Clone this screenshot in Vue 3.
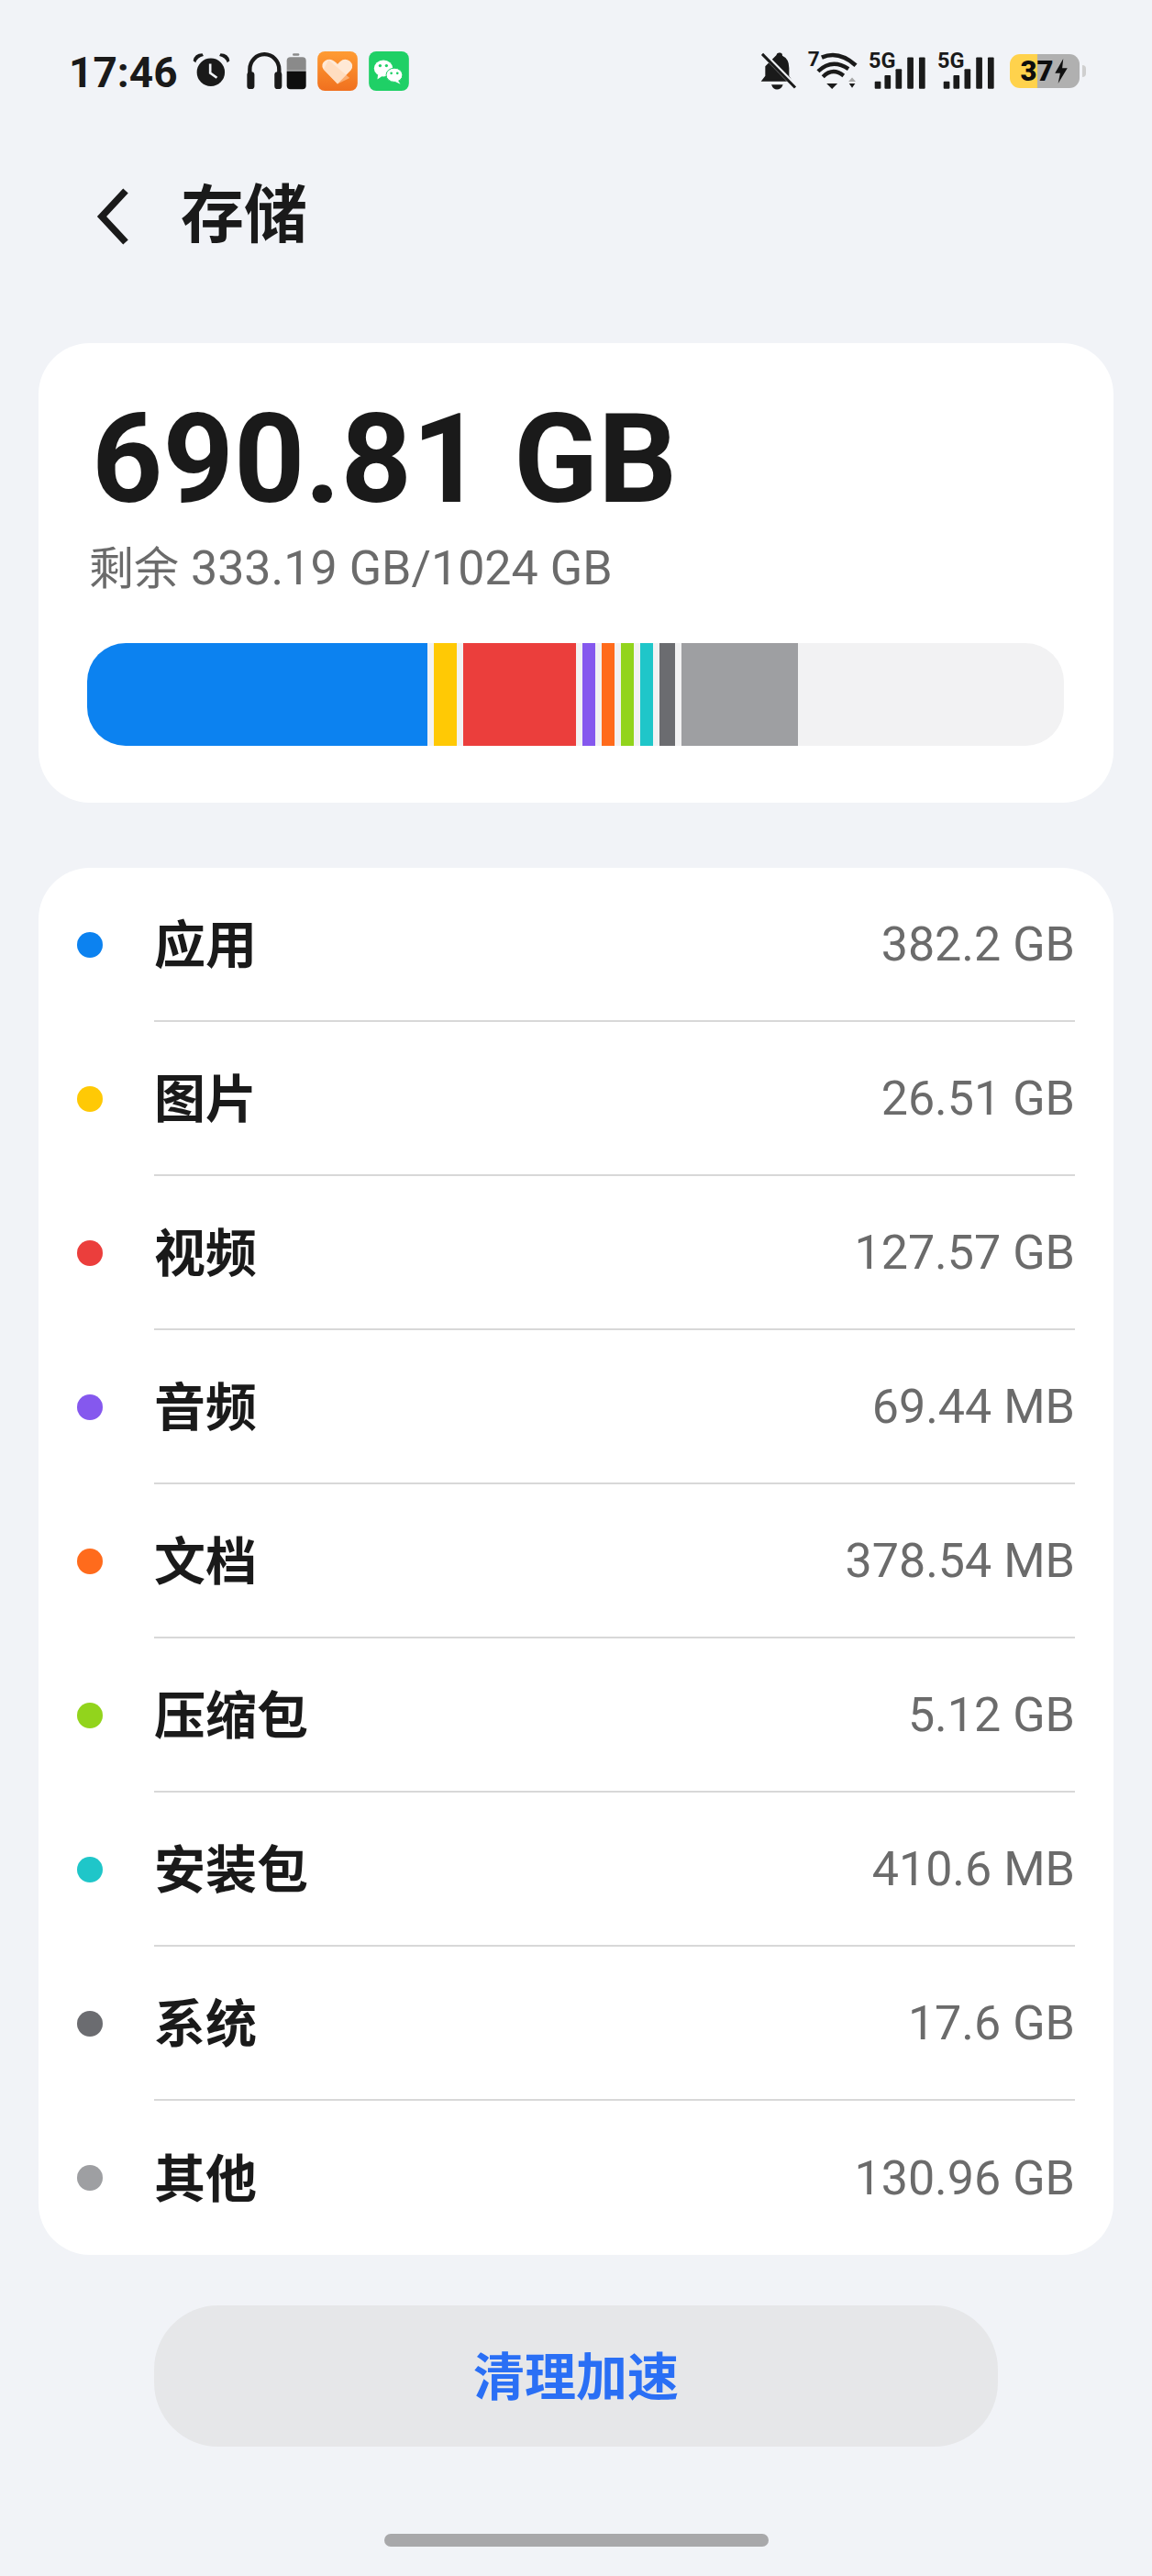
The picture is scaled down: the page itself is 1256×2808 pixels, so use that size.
<script setup>
const segments = [
  { color: '#0c82f0', width: 371 },
  { color: '#ffc905', width: 25 },
  { color: '#eb3e3c', width: 123 },
  { color: '#8558ee', width: 14 },
  { color: '#ff6b1c', width: 14 },
  { color: '#92d41c', width: 14 },
  { color: '#1fc6c9', width: 14 },
  { color: '#6b6c70', width: 17 },
  { color: '#9e9fa2', width: 126.5 },
]

const rows = [
  { name: '应用', size: '382.2 GB', color: '#0c82f0' },
  { name: '图片', size: '26.51 GB', color: '#ffc905' },
  { name: '视频', size: '127.57 GB', color: '#eb3e3c' },
  { name: '音频', size: '69.44 MB', color: '#8558ee' },
  { name: '文档', size: '378.54 MB', color: '#ff6b1c' },
  { name: '压缩包', size: '5.12 GB', color: '#92d41c' },
  { name: '安装包', size: '410.6 MB', color: '#1fc6c9' },
  { name: '系统', size: '17.6 GB', color: '#6b6c70' },
  { name: '其他', size: '130.96 GB', color: '#9e9fa2' },
]
</script>

<template>
  <div class="page">
    <!-- status bar -->
    <div class="status">
      <div class="status-left">
        <span class="time">17:46</span>
        <svg class="ic alarm" viewBox="480 82 130 125" width="43" height="42">
          <circle cx="540" cy="150" r="46" fill="#1a1a1a" />
          <path d="M482 112 Q486 88 512 88 L516 96 Q496 100 490 118Z" fill="#1a1a1a" />
          <path d="M602 112 Q598 88 572 88 L568 96 Q588 100 594 118Z" fill="#1a1a1a" />
          <path d="M538 122 V152 L560 168" fill="none" stroke="#f1f3f7" stroke-width="8" />
        </svg>
        <svg class="ic phones" viewBox="652 85 122 122" width="41" height="41">
          <path d="M665 170 V140 A45 46 0 0 1 760 140 V170" fill="none" stroke="#1a1a1a" stroke-width="13" />
          <rect x="656" y="148" width="24" height="56" rx="10" fill="#1a1a1a" />
          <rect x="745" y="148" width="24" height="56" rx="10" fill="#1a1a1a" />
        </svg>
        <svg class="ic pod" viewBox="785 85 66 122" width="22" height="41">
          <rect x="806" y="88" width="22" height="8" rx="4" fill="#8a8a8a" />
          <path d="M787 144 V112 Q787 100 799 100 H838 Q850 100 850 112 V144Z" fill="#8a8a8a" />
          <path d="M787 146 H850 V194 Q850 205 838 205 H799 Q787 205 787 194Z" fill="#0e0e0e" />
        </svg>
        <svg class="ic health" viewBox="888 80 132 130" width="44" height="43">
          <defs>
            <linearGradient id="hg" x1="0" y1="0" x2="0" y2="1">
              <stop offset="0" stop-color="#ff9c33" />
              <stop offset="1" stop-color="#f0701f" />
            </linearGradient>
          </defs>
          <rect x="888" y="80" width="132" height="130" rx="24" fill="url(#hg)" />
          <path d="M954 187 L908 140 Q896 122 914 110 Q932 100 950 118 L954 122 L962 114 Q978 100 994 112 Q1010 126 998 142Z" fill="#ffe9d6" />
          <path d="M924 108 L994 168 L954 187 L908 140Z" fill="#ffd3ae" opacity=".55" />
        </svg>
        <svg class="ic wechat" viewBox="1056 80 132 130" width="44" height="43">
          <rect x="1056" y="80" width="132" height="130" rx="24" fill="#1fd066" />
          <ellipse cx="1104" cy="136" rx="31" ry="27" fill="#fff" />
          <path d="M1086 156 L1084 172 L1102 160Z" fill="#fff" />
          <ellipse cx="1140" cy="158" rx="27" ry="23" fill="#fff" stroke="#1fd066" stroke-width="3" />
          <path d="M1152 176 L1160 188 L1140 178Z" fill="#fff" />
          <circle cx="1093" cy="127" r="5" fill="#1fd066" />
          <circle cx="1114" cy="127" r="5" fill="#1fd066" />
          <circle cx="1130" cy="152" r="4" fill="#1fd066" />
          <circle cx="1150" cy="152" r="4" fill="#1fd066" />
        </svg>
      </div>
      <div class="status-right">
        <svg class="bell" viewBox="98 80 120 125" width="40" height="42">
          <path d="M150 92 Q152 82 162 84 Q170 84 170 94 Q192 104 192 134 V160 L204 178 H100 L114 160 V128Z" fill="#1a1a1a" />
          <path d="M134 188 H172 Q166 204 152 204 Q140 204 134 188Z" fill="#1a1a1a" />
          <path d="M104 84 L212 194" stroke="#f1f3f7" stroke-width="16" />
          <path d="M104 88 L212 198" stroke="#1a1a1a" stroke-width="9" />
        </svg>
        <svg class="wifi" viewBox="248 60 166 146" width="55" height="49">
          <text x="250" y="128" class="s-text seven">7</text>
          <path d="M296 100 Q352 76 408 126" fill="none" stroke="#1a1a1a" stroke-width="14" />
          <path d="M284 146 Q330 102 384 138" fill="none" stroke="#1a1a1a" stroke-width="13" />
          <path d="M300 164 Q332 132 368 160" fill="none" stroke="#1a1a1a" stroke-width="13" />
          <path d="M312 186 H348 L330 204Z" fill="#1a1a1a" />
          <path d="M396 166 L408 180 H384Z" fill="#a8a8a8" />
          <path d="M386 186 H406 L396 200Z" fill="#1a1a1a" />
        </svg>
        <svg v-for="n in 2" :key="n" class="signal" viewBox="446 66 188 139" width="63" height="47">
          <text x="446" y="135" class="s-text five">5G</text>
          <rect x="466" y="178" width="20" height="24" rx="3" fill="#1a1a1a" />
          <rect x="498" y="158" width="20" height="44" rx="3" fill="#1a1a1a" />
          <rect x="534" y="138" width="20" height="64" rx="3" fill="#1a1a1a" />
          <rect x="572" y="100" width="20" height="102" rx="3" fill="#1a1a1a" />
          <rect x="610" y="100" width="20" height="102" rx="3" fill="#1a1a1a" />
        </svg>
        <div class="battery">
          <div class="battery-body">
            <span>37</span>
            <svg viewBox="0 0 14 24" width="16" height="27">
              <path d="M9 0 L1 14 H6 L4 24 L13 9 H8Z" fill="#111" />
            </svg>
          </div>
          <div class="battery-nub"></div>
        </div>
      </div>
    </div>

    <!-- header -->
    <div class="header">
      <svg class="back" viewBox="0 0 40 64" width="40" height="64">
        <path d="M33 4 L7 32 L33 60" fill="none" stroke="#1a1a1a" stroke-width="7.5" />
      </svg>
      <h1>存储</h1>
    </div>

    <!-- usage -->
    <section class="card usage">
      <div class="used">690.81 GB</div>
      <div class="left"><span class="left-label">剩余</span> 333.19 GB/1024 GB</div>
      <div class="bar">
        <div
          v-for="(seg, i) in segments"
          :key="i"
          class="seg"
          :style="{ width: seg.width + 'px', background: seg.color }"
        ></div>
      </div>
    </section>

    <!-- list -->
    <section class="card list">
      <div v-for="row in rows" :key="row.name" class="row">
        <span class="dot" :style="{ background: row.color }"></span>
        <div class="row-main">
          <span class="name">{{ row.name }}</span>
          <span class="size">{{ row.size }}</span>
        </div>
      </div>
    </section>

    <button class="clean">清理加速</button>
    <div class="home"></div>
  </div>
</template>

<style scoped>
.page {
  width: 1256px;
  height: 2808px;
  box-sizing: border-box;
  background: #f1f3f7;
  padding-top: 54px;
  overflow: hidden;
  font-family: Roboto, "Noto Sans CJK SC", sans-serif;
  color: #1a1a1a;
}

.status {
  height: 46px;
  display: flex;
  justify-content: space-between;
  align-items: center;
  padding: 0 72px 0 75px;
}

.status-left,
.status-right {
  display: flex;
  align-items: center;
}

.time {
  font-size: 46px;
  font-weight: 700;
  width: 135px;
  margin-top: 3px;
}

.ic {
  flex: none;
}

.phones {
  margin-left: 15px;
}

.pod {
  margin-left: 3px;
}

.health {
  margin-left: 12px;
}

.wechat {
  margin-left: 12px;
}

.status-right svg {
  flex: none;
}

.wifi {
  margin-left: 11px;
  margin-top: -7px;
}

.signal {
  margin-left: 12px;
  margin-top: -5px;
}

.s-text {
  font-family: Roboto, sans-serif;
  font-weight: 700;
  fill: #1a1a1a;
}

.seven {
  font-size: 68px;
}

.five {
  font-size: 70px;
}

.battery {
  display: flex;
  align-items: center;
  margin-left: 16px;
}

.battery-body {
  width: 76px;
  height: 37px;
  border-radius: 11px;
  background: linear-gradient(90deg, #ffd24c 0 30px, #b0b0b0 30px);
  display: flex;
  align-items: center;
  justify-content: center;
  gap: 1px;
  font-size: 31px;
  font-weight: 900;
  color: #0e0e0e;
}

.battery-nub {
  width: 4px;
  height: 13px;
  margin-left: 3px;
  border-radius: 0 4px 4px 0;
  background: #cfcfcf;
}

.header {
  display: flex;
  align-items: center;
  height: 68px;
  margin-top: 102px;
  padding-left: 104px;
}

.header h1 {
  margin: 0 0 0 53px;
  font-size: 69px;
  font-weight: 700;
  line-height: 68px;
}

.card {
  margin: 0 42px;
  background: #fff;
  border-radius: 56px;
}

.usage {
  height: 501px;
  margin-top: 104px;
  box-sizing: border-box;
  padding: 62px 53px 0;
}

.used {
  font-size: 135px;
  font-weight: 700;
  line-height: 130px;
  color: #1a1a1a;
  padding-left: 5px;
}

.left {
  margin-top: 23px;
  padding-left: 2px;
  font-size: 52px;
  line-height: 62px;
  color: #6b6b6b;
}

.left-label {
  font-size: 49px;
}

.bar {
  display: flex;
  gap: 7px;
  width: 1065px;
  height: 112px;
  margin-top: 49px;
  border-radius: 42px;
  overflow: hidden;
  background: #f2f2f3;
}

.seg {
  flex: none;
  height: 100%;
}

.list {
  margin-top: 71px;
}

.row {
  display: flex;
  align-items: center;
  height: 168px;
  padding-left: 42px;
}

.dot {
  flex: none;
  width: 28px;
  height: 28px;
  border-radius: 50%;
  margin-right: 56px;
}

.row-main {
  flex: 1;
  height: 100%;
  margin-right: 42px;
  display: flex;
  align-items: center;
  justify-content: space-between;
  border-bottom: 2px solid #d8d8d8;
  box-sizing: border-box;
}

.row:last-child .row-main {
  border-bottom: none;
}

.name {
  font-size: 56px;
  font-weight: 700;
  color: #1a1a1a;
  margin-bottom: 7px;
}

.size {
  font-size: 52px;
  color: #6b6b6b;
}

.clean {
  display: block;
  width: 920px;
  height: 154px;
  margin: 55px auto 0;
  padding: 0 0 7px;
  border: none;
  border-radius: 70px;
  background: #e6e7e9;
  color: #2a6ff5;
  font-family: Roboto, "Noto Sans CJK SC", sans-serif;
  font-size: 56px;
  font-weight: 700;
}

.home {
  width: 419px;
  height: 14px;
  margin: 95px auto 0;
  border-radius: 7px;
  background: #a8a8aa;
}
</style>

<style>
html,
body {
  margin: 0;
  background: #f1f3f7;
}
</style>
